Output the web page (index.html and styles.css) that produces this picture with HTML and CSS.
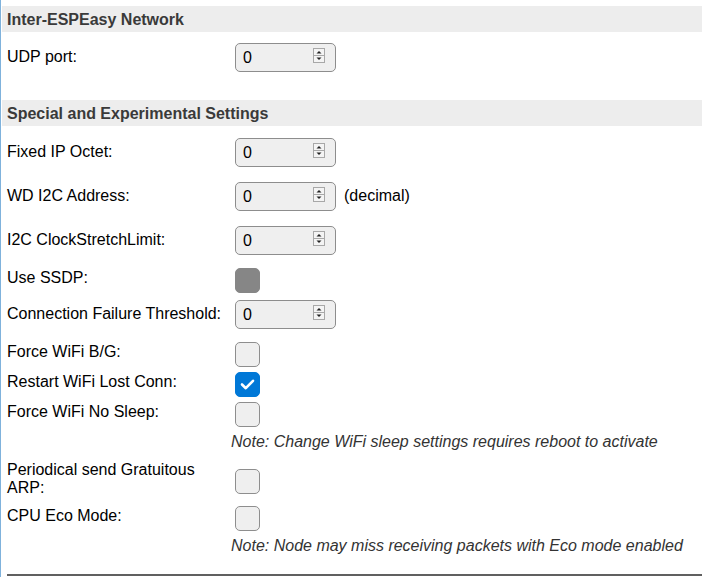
FILE: index.html
```html
<!DOCTYPE html>
<html>
<head>
<meta charset="utf-8">
<link rel="stylesheet" href="styles.css">
</head>
<body>
<div class="page">
  <div class="hdr">Inter-ESPEasy Network</div>
  <div class="row num">
    <div class="lbl">UDP port:</div>
    <div class="numbox"><span>0</span><svg class="spin" width="12" height="15" viewBox="0 0 12 15"><rect x="0.5" y="0.5" width="11" height="14" fill="#f4f4f4" stroke="#a8a8a8"/><line x1="1" y1="7.5" x2="11" y2="7.5" stroke="#a8a8a8"/><polygon points="3.5,5.5 6,3 8.5,5.5" fill="#222"/><polygon points="3.5,9.5 8.5,9.5 6,12" fill="#222"/></svg></div>
  </div>

  <div class="hdr hdr2">Special and Experimental Settings</div>
  <div class="row num">
    <div class="lbl">Fixed IP Octet:</div>
    <div class="numbox"><span>0</span><svg class="spin" width="12" height="15" viewBox="0 0 12 15"><rect x="0.5" y="0.5" width="11" height="14" fill="#f4f4f4" stroke="#a8a8a8"/><line x1="1" y1="7.5" x2="11" y2="7.5" stroke="#a8a8a8"/><polygon points="3.5,5.5 6,3 8.5,5.5" fill="#222"/><polygon points="3.5,9.5 8.5,9.5 6,12" fill="#222"/></svg></div>
  </div>
  <div class="row num">
    <div class="lbl">WD I2C Address:</div>
    <div class="numbox"><span>0</span><svg class="spin" width="12" height="15" viewBox="0 0 12 15"><rect x="0.5" y="0.5" width="11" height="14" fill="#f4f4f4" stroke="#a8a8a8"/><line x1="1" y1="7.5" x2="11" y2="7.5" stroke="#a8a8a8"/><polygon points="3.5,5.5 6,3 8.5,5.5" fill="#222"/><polygon points="3.5,9.5 8.5,9.5 6,12" fill="#222"/></svg></div>
    <div class="unit">(decimal)</div>
  </div>
  <div class="row num">
    <div class="lbl">I2C ClockStretchLimit:</div>
    <div class="numbox"><span>0</span><svg class="spin" width="12" height="15" viewBox="0 0 12 15"><rect x="0.5" y="0.5" width="11" height="14" fill="#f4f4f4" stroke="#a8a8a8"/><line x1="1" y1="7.5" x2="11" y2="7.5" stroke="#a8a8a8"/><polygon points="3.5,5.5 6,3 8.5,5.5" fill="#222"/><polygon points="3.5,9.5 8.5,9.5 6,12" fill="#222"/></svg></div>
  </div>
  <div class="row chk">
    <div class="lbl">Use SSDP:</div>
    <div class="cb disabled"></div>
  </div>
  <div class="row num">
    <div class="lbl">Connection Failure Threshold:</div>
    <div class="numbox"><span>0</span><svg class="spin" width="12" height="15" viewBox="0 0 12 15"><rect x="0.5" y="0.5" width="11" height="14" fill="#f4f4f4" stroke="#a8a8a8"/><line x1="1" y1="7.5" x2="11" y2="7.5" stroke="#a8a8a8"/><polygon points="3.5,5.5 6,3 8.5,5.5" fill="#222"/><polygon points="3.5,9.5 8.5,9.5 6,12" fill="#222"/></svg></div>
  </div>
  <div class="row chk">
    <div class="lbl">Force WiFi B/G:</div>
    <div class="cb"></div>
  </div>
  <div class="row chk">
    <div class="lbl">Restart WiFi Lost Conn:</div>
    <div class="cb checked"><svg width="25" height="25" viewBox="0 0 25 25"><polyline points="7,12.5 10.8,16.2 18,8.8" fill="none" stroke="#fff" stroke-width="2.6" stroke-linecap="round" stroke-linejoin="round"/></svg></div>
  </div>
  <div class="row chk">
    <div class="lbl">Force WiFi No Sleep:</div>
    <div class="cb"></div>
  </div>
  <div class="note">Note: Change WiFi sleep settings requires reboot to activate</div>
  <div class="row chk2">
    <div class="lbl">Periodical send Gratuitous ARP:</div>
    <div class="cb"></div>
  </div>
  <div class="row chk">
    <div class="lbl">CPU Eco Mode:</div>
    <div class="cb"></div>
  </div>
  <div class="note">Note: Node may miss receiving packets with Eco mode enabled</div>
  <div class="sep"></div>
</div>
</body>
</html>
```

FILE: styles.css
```css
html, body {
  margin: 0;
  padding: 0;
  background: #fff;
}
body {
  font-family: "Liberation Sans", Arial, sans-serif;
  font-size: 16px;
  color: #000;
}
.page {
  box-sizing: border-box;
  min-height: 577px;
  border-left: 1px solid #7fb2dc;
  padding: 6px 0 0 1px;
}
.hdr {
  box-sizing: border-box;
  height: 26px;
  line-height: 24px;
  padding-top: 2px;
  background: #ededed;
  color: #3a3a3a;
  font-weight: bold;
  padding-left: 5px;
  margin-bottom: 4px;
}
.hdr2 {
  margin-top: 20px;
  margin-bottom: 5px;
}
.row {
  display: flex;
  align-items: flex-start;
  padding-left: 5px;
  box-sizing: border-box;
}
.lbl {
  width: 228px;
  flex: none;
  line-height: 18px;
}
.num {
  height: 44px;
}
.num .lbl {
  padding-top: 12px;
}
.numbox {
  box-sizing: border-box;
  width: 101px;
  height: 29px;
  margin-top: 7px;
  border: 1px solid #8d8d8d;
  border-radius: 5px;
  background: #efefef;
  display: flex;
  align-items: flex-start;
  justify-content: space-between;
  padding: 0 10px 0 7px;
  line-height: 27px;
}
.spin {
  display: block;
  margin-top: 4px;
}
.unit {
  margin-left: 8px;
  padding-top: 12px;
  line-height: 18px;
}
.chk {
  height: 30px;
}
.chk .lbl {
  padding-top: 6px;
}
.chk2 {
  height: 44px;
}
.chk2 .lbl {
  padding-top: 4px;
  width: 222px;
  margin-right: 6px;
}
.chk2 .cb {
  margin-top: 12px;
}
.cb {
  box-sizing: border-box;
  width: 25px;
  height: 25px;
  margin-top: 5px;
  border: 1px solid #8e8e8e;
  border-radius: 5px;
  background: #efefef;
}
.cb svg {
  display: block;
  margin: -1px;
}
.cb.disabled {
  background: #868686;
  border-color: #868686;
}
.cb.checked {
  background: #0078d7;
  border-color: #0078d7;
}
.note {
  height: 30px;
  box-sizing: border-box;
  padding: 6px 0 0 229px;
  line-height: 18px;
  font-style: italic;
  color: #333;
}
.sep {
  margin: 13px 0 0 5px;
  height: 2px;
  background: #606060;
}
```
